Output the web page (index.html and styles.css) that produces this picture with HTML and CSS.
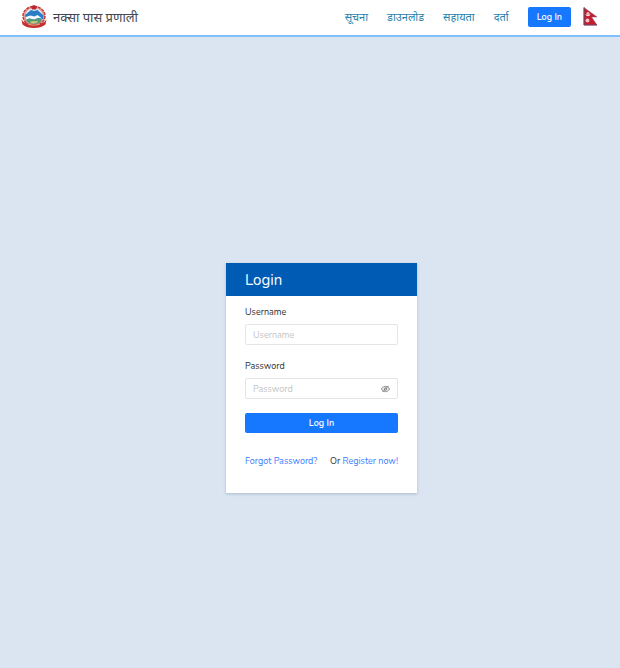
FILE: index.html
```html
<!DOCTYPE html>
<html lang="ne">
<head>
<meta charset="utf-8">
<meta name="viewport" content="width=device-width, initial-scale=1">
<title>नक्सा पास प्रणाली</title>
<link rel="stylesheet" href="styles.css">
</head>
<body>
<header class="topbar">
  <a class="brand" href="#">
    <svg class="emblem" viewBox="0 0 52 46" aria-hidden="true">
      <ellipse cx="26" cy="22" rx="20" ry="18" fill="#dfeaf0" stroke="#e2a29b" stroke-width="5"/>
      <ellipse cx="26" cy="22" rx="22" ry="19" fill="none" stroke="#c33c3c" stroke-width="3" stroke-dasharray="6 2"/>
      <path d="M8 20 20 10l6 2 7-2 12 11-1 7H9z" fill="#2b7cc6"/>
      <path d="m9 24 10-3 8 2 6-3 9 7-8-1-8 3-9-2-7 2z" fill="#f4f8fa"/>
      <path d="M10 29c8-4 12 1 19-1s9-1 13 1c-2 6-8 9-16 9s-14-3-16-9z" fill="#4f9a78"/>
      <path d="M18 34c6-3 10 0 17-3-2 4-6 6-9 6s-6-1-8-3z" fill="#dfc37b"/>
      <path d="m20 3 6-3 6 3-2 6h-8z" fill="#b92735"/>
      <path d="M1 29c5 8 14 9 25 9s20-1 25-9l-2 10c-6 5-14 7-23 7S8 44 3 39z" fill="#c5302f"/>
      <path d="M14 38c8 3 16 3 24 0" fill="none" stroke="#e8ad8c" stroke-width="2"/>
    </svg>
    <span>नक्सा पास प्रणाली</span>
  </a>
  <nav class="menu">
    <a href="#">सूचना</a>
    <a href="#">डाउनलोड</a>
    <a href="#">सहायता</a>
    <a href="#">दर्ता</a>
  </nav>
  <button class="button" type="button">Log In</button>
  <svg class="flag" viewBox="0 0 30 40" role="img" aria-label="नेपाल">
    <path d="M2 1 28 20H17l11 16H2z" fill="#c51d2d" stroke="#8d5275" stroke-width="1"/>
    <path d="M5 14c1 6 9 6 10 0-2 2-8 2-10 0z" fill="#f3dfe2"/>
    <circle cx="10" cy="13" r="3" fill="#e9bcc2"/>
    <circle cx="9" cy="27" r="4" fill="#ecc5ca"/>
    <path d="M2 1v35h26" fill="none" stroke="#77405f" stroke-width="2"/>
  </svg>
</header>
<main class="page">
  <form class="card">
    <h1 class="card-title">Login</h1>
    <div class="card-body">
      <label class="label" for="username">Username</label>
      <div class="field">
        <input id="username" type="text" placeholder="Username">
      </div>
      <label class="label" for="password">Password</label>
      <div class="field">
        <input id="password" type="password" placeholder="Password">
        <button class="reveal" type="button" aria-label="Show password">
          <svg viewBox="0 0 20 18" fill="none" stroke="#777" stroke-width="2" aria-hidden="true">
            <path d="M1 9c4-8 14-8 18 0-4 8-14 8-18 0zM3 16 17 2"/>
            <circle cx="10" cy="9" r="3"/>
          </svg>
        </button>
      </div>
      <button class="button" type="submit">Log In</button>
      <div class="links">
        <a href="#">Forgot Password?</a>
        <span>Or <a href="#">Register now!</a></span>
      </div>
    </div>
  </form>
</main>
</body>
</html>
```
FILE: styles.css
```css
* {
  box-sizing: border-box;
}

body {
  display: flex;
  flex-direction: column;
  min-height: 100vh;
  margin: 0;
  background: #dbe5f1;
  color: #303030;
  font: 9px/14px Nunito, Lato, "Noto Sans", sans-serif;
}

a {
  color: #3c7cff;
  text-decoration: none;
}

button,
input {
  font: inherit;
}

.topbar {
  display: flex;
  align-items: center;
  height: 37px;
  padding: 0 22px 2px 21px;
  border-bottom: 2px solid #82bfff;
  background: #fff;
}

.brand {
  display: flex;
  align-items: center;
  gap: 6px;
  margin-right: auto;
  color: #424851;
  font-size: 13px;
  line-height: 20px;
}

.brand span,
.menu {
  padding-top: 2px;
}

.emblem {
  width: 26px;
  height: 23px;
}

.menu {
  display: flex;
  gap: 19px;
  margin-right: 19px;
  font-size: 11px;
  line-height: 18px;
}

.menu a {
  color: #2782ac;
}

.button {
  height: 20px;
  padding: 0 9px;
  border: 0;
  border-radius: 2px;
  background: #1677ff;
  color: #fff;
  font-weight: 600;
  line-height: 20px;
}

.flag {
  width: 15px;
  height: 20px;
  margin-left: 12px;
}

.page {
  display: grid;
  flex: 1;
  place-items: center;
  padding: 51px 0 0 23px;
}

.card {
  width: 191px;
  background: #fff;
  box-shadow: 0 1px 3px #a9bacd;
}

.card-title {
  margin: 0;
  padding: 7px 19px 6px;
  background: #005bb5;
  color: #fff;
  font-size: 15px;
  font-weight: 400;
  line-height: 20px;
}

.card-body {
  display: flex;
  flex-direction: column;
  padding: 9px 19px 25px;
}

.label {
  margin-bottom: 5px;
}

.field {
  display: flex;
  align-items: center;
  height: 21px;
  margin-bottom: 14px;
  padding: 0 7px;
  border: 1px solid #e5e5e5;
  border-radius: 2px;
}

.field input {
  flex: 1;
  min-width: 0;
  padding: 0;
  border: 0;
  outline: 0;
  background: transparent;
}

.field input::placeholder {
  color: #c4c4c4;
}

.reveal {
  display: flex;
  padding: 0;
  border: 0;
  background: none;
}

.reveal svg {
  width: 9px;
  height: 8px;
}

.links {
  display: flex;
  justify-content: space-between;
  margin-top: 21px;
  white-space: nowrap;
}
```
